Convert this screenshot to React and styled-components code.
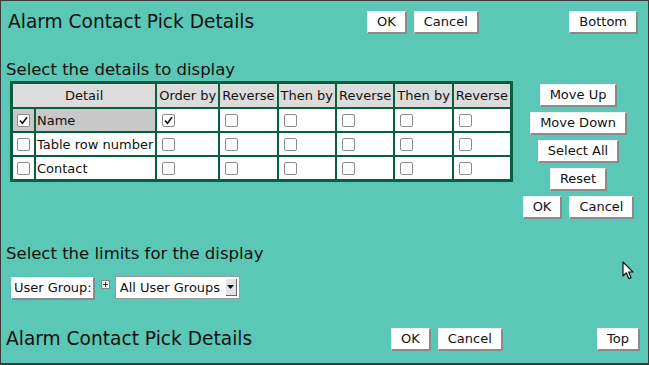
import React from 'react'
import styled, { createGlobalStyle } from 'styled-components'

const GlobalStyle = createGlobalStyle`
    html, body {
        margin: 0;
        padding: 0;
        background: #5bc7b6;
    }
    * {
        box-sizing: border-box;
    }
`

const columns = ['Order by', 'Reverse', 'Then by', 'Reverse', 'Then by', 'Reverse']

const rows = [
    { label: 'Name', picked: true, order: [true, false, false, false, false, false] },
    { label: 'Table row number', picked: false, order: [false, false, false, false, false, false] },
    { label: 'Contact', picked: false, order: [false, false, false, false, false, false] },
]

function Check({ checked }) {
    return (
        <Box>
            {checked && (
                <svg width="11" height="11" viewBox="0 0 11 11">
                    <path d="M2 5.5 L4.5 8.3 L9 2.2" fill="none" stroke="#111" strokeWidth="1.6" />
                </svg>
            )}
        </Box>
    )
}

function App() {
    return (
        <Page>
            <GlobalStyle />
            <Header>
                <Title>Alarm Contact Pick Details</Title>
                <ButtonGroup>
                    <Button>OK</Button>
                    <Button>Cancel</Button>
                </ButtonGroup>
                <Spacer />
                <Button>Bottom</Button>
            </Header>

            <Section>Select the details to display</Section>
            <DetailsRow>
                <Grid>
                    <thead>
                        <tr>
                            <Head colSpan={2}>Detail</Head>
                            {columns.map((c, i) => (
                                <Head key={i}>{c}</Head>
                            ))}
                        </tr>
                    </thead>
                    <tbody>
                        {rows.map((r) => (
                            <tr key={r.label}>
                                <Cell $shade={r.picked} $narrow>
                                    <Check checked={r.picked} />
                                </Cell>
                                <Cell $shade={r.picked}>{r.label}</Cell>
                                {r.order.map((o, i) => (
                                    <Cell key={i} $box>
                                        <Check checked={o} />
                                    </Cell>
                                ))}
                            </tr>
                        ))}
                    </tbody>
                </Grid>
                <SideButtons>
                    <Button>Move Up</Button>
                    <Button>Move Down</Button>
                    <Button>Select All</Button>
                    <Button>Reset</Button>
                    <ButtonGroup>
                        <Button>OK</Button>
                        <Button>Cancel</Button>
                    </ButtonGroup>
                </SideButtons>
            </DetailsRow>

            <Section $top={25}>Select the limits for the display</Section>
            <LimitRow>
                <Button $tight>User Group:</Button>
                <Expand>
                    <svg width="9" height="9" viewBox="0 0 9 9">
                        <rect x="0.5" y="0.5" width="8" height="8" fill="#f4f4f4" stroke="#888" />
                        <path d="M2 4.5 H7 M4.5 2 V7" stroke="#333" strokeWidth="1" />
                    </svg>
                </Expand>
                <Select>
                    <span>All User Groups</span>
                    <Arrow>
                        <svg width="7" height="4" viewBox="0 0 7 4">
                            <path d="M0 0 H7 L3.5 4 Z" fill="#111" />
                        </svg>
                    </Arrow>
                </Select>
            </LimitRow>

            <Footer>
                <Title $small>Alarm Contact Pick Details</Title>
                <ButtonGroup>
                    <Button>OK</Button>
                    <Button>Cancel</Button>
                </ButtonGroup>
                <Spacer />
                <Button>Top</Button>
            </Footer>

            <Cursor>
                <svg width="13" height="20" viewBox="0 0 13 20">
                    <path d="M1 1 L1 15 L4.3 11.8 L6.8 17.6 L9 16.6 L6.6 11 L11 11 Z" fill="#fff" stroke="#111" strokeWidth="1.2" strokeLinejoin="round" />
                </svg>
            </Cursor>
        </Page>
    )
}

export default App

const Page = styled.div`
    position: relative;
    width: 649px;
    height: 365px;
    overflow: hidden;
    border: 1px solid #3a3a3a;
    border-bottom: 2px solid #3a3a3a;
    background: #5bc7b6;
    padding: 9px 10px 0 5px;
    font-family: "DejaVu Sans", Verdana, sans-serif;
    color: #111;
`

const Header = styled.div`
    display: flex;
    align-items: center;
    height: 24px;
`

const Title = styled.div`
    width: ${(p) => (p.$small ? '385px' : '361px')};
    padding-left: ${(p) => (p.$small ? '0' : '2px')};
    font-size: 18.6px;
    line-height: 22px;
`

const ButtonGroup = styled.div`
    display: flex;
    gap: 7px;
`

const Spacer = styled.div`
    flex: 1;
`

const Button = styled.button`
    height: 23px;
    padding: ${(p) => (p.$tight ? '0 1px 1px 2px' : '0 9px 1px')};
    font-family: "DejaVu Sans", Verdana, sans-serif;
    font-size: 13px;
    color: #111;
    background: #fff;
    border-style: solid;
    border-width: 1px 2px 2px 1px;
    border-color: #f0f0f0 #8a8a8a #8a8a8a #f0f0f0;
    border-radius: 0;
    cursor: pointer;
    white-space: nowrap;
`

const Section = styled.div`
    margin-top: ${(p) => (p.$top || 26)}px;
    font-size: 16.5px;
    line-height: 20px;
`

const DetailsRow = styled.div`
    display: flex;
    align-items: flex-start;
    margin-top: 1px;
`

const Grid = styled.table`
    margin-left: 4px;
    border-collapse: separate;
    border-spacing: 2px;
    border: 1px solid #0b5e3c;
    background: #0b5e3c;
    font-size: 13px;
`

const Head = styled.th`
    height: 23px;
    padding: 0 2px;
    background: #dcdcdc;
    font-weight: normal;
    text-align: center;
    white-space: nowrap;
`

const Cell = styled.td`
    height: 22px;
    padding: ${(p) => (p.$narrow ? '0 4px' : p.$box ? '0 4px 0 5px' : '0 2px 0 1px')};
    background: ${(p) => (p.$shade ? '#c8c8c8' : '#fff')};
    white-space: nowrap;
    vertical-align: middle;
`

const Box = styled.span`
    display: flex;
    align-items: center;
    justify-content: center;
    width: 13px;
    height: 13px;
    border: 1px solid #8c8c8c;
    border-radius: 2px;
    background: #fff;
`

const SideButtons = styled.div`
    flex: 1;
    display: flex;
    flex-direction: column;
    align-items: center;
    gap: 5px;
    margin-top: 3px;
    padding-left: 6px;
`

const LimitRow = styled.div`
    display: flex;
    align-items: flex-start;
    margin-top: 13px;
    padding-left: 5px;
`

const Expand = styled.span`
    display: flex;
    margin: 3px 5px 0 6px;
`

const Select = styled.div`
    display: flex;
    align-items: center;
    justify-content: space-between;
    width: 125px;
    height: 23px;
    margin-top: -1px;
    padding: 0 2px 0 4px;
    background: #fff;
    border: 1px solid #9a9a9a;
    font-size: 13px;
`

const Arrow = styled.span`
    display: flex;
    align-items: center;
    justify-content: center;
    width: 11px;
    height: 17px;
    background: #e4e4e4;
    border-right: 1px solid #666;
    border-bottom: 1px solid #666;
`

const Footer = styled.div`
    display: flex;
    align-items: center;
    height: 24px;
    margin-top: 27px;
    margin-right: -2px;
`

const Cursor = styled.div`
    position: absolute;
    left: 621px;
    top: 260px;
    display: flex;
`
